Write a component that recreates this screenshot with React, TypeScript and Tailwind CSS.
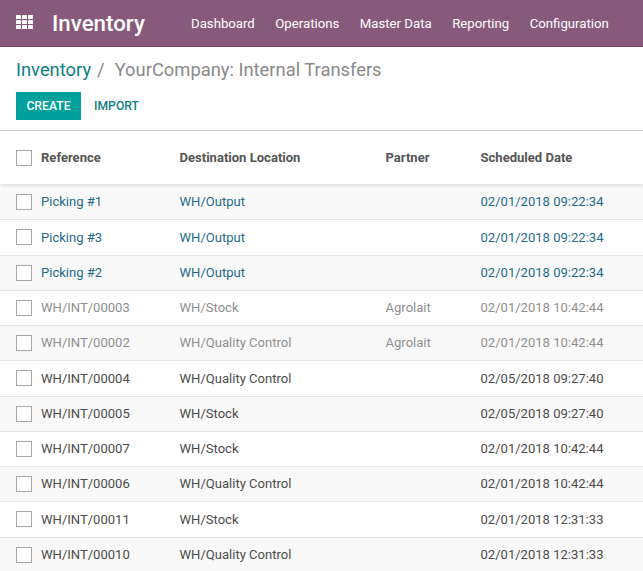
const NAV_ITEMS = ['Dashboard', 'Operations', 'Master Data', 'Reporting', 'Configuration']

type Tone = 'blue' | 'muted' | 'dark'

const ROWS: { ref: string; dest: string; partner: string; date: string; tone: Tone }[] = [
  { ref: 'Picking #1', dest: 'WH/Output', partner: '', date: '02/01/2018 09:22:34', tone: 'blue' },
  { ref: 'Picking #3', dest: 'WH/Output', partner: '', date: '02/01/2018 09:22:34', tone: 'blue' },
  { ref: 'Picking #2', dest: 'WH/Output', partner: '', date: '02/01/2018 09:22:34', tone: 'blue' },
  { ref: 'WH/INT/00003', dest: 'WH/Stock', partner: 'Agrolait', date: '02/01/2018 10:42:44', tone: 'muted' },
  { ref: 'WH/INT/00002', dest: 'WH/Quality Control', partner: 'Agrolait', date: '02/01/2018 10:42:44', tone: 'muted' },
  { ref: 'WH/INT/00004', dest: 'WH/Quality Control', partner: '', date: '02/05/2018 09:27:40', tone: 'dark' },
  { ref: 'WH/INT/00005', dest: 'WH/Stock', partner: '', date: '02/05/2018 09:27:40', tone: 'dark' },
  { ref: 'WH/INT/00007', dest: 'WH/Stock', partner: '', date: '02/01/2018 10:42:44', tone: 'dark' },
  { ref: 'WH/INT/00006', dest: 'WH/Quality Control', partner: '', date: '02/01/2018 10:42:44', tone: 'dark' },
  { ref: 'WH/INT/00011', dest: 'WH/Stock', partner: '', date: '02/01/2018 12:31:33', tone: 'dark' },
  { ref: 'WH/INT/00010', dest: 'WH/Quality Control', partner: '', date: '02/01/2018 12:31:33', tone: 'dark' },
]

const TONE_CLASS: Record<Tone, string> = {
  blue: 'text-[#1f6b8a]',
  muted: 'text-[#8f8f8f]',
  dark: 'text-[#4c4c4c]',
}

function Checkbox() {
  return <span className="block w-[16px] h-[16px] border border-[#a8a8a8] bg-white" />
}

function AppsIcon() {
  return (
    <svg width="18" height="14" viewBox="0 0 18 14" fill="#fff">
      {[0, 5, 10].map(y =>
        [0, 6, 12].map(x => <rect key={`${x}-${y}`} x={x} y={y} width="5" height="4" rx="0.6" />),
      )}
    </svg>
  )
}

export default function App() {
  return (
    <div className="w-[643px] h-[571px] overflow-hidden bg-white font-['Roboto',sans-serif]">
      {/* Navbar */}
      <div className="h-[47px] bg-[#875a7b] border-b border-[#6f4a66] flex items-center text-white">
        <div className="ml-[16px] w-[36px] mb-[2px]">
          <AppsIcon />
        </div>
        <span className="text-[22.3px] font-medium w-[139px] mt-[1px]">Inventory</span>
        <div className="flex gap-[20.5px] text-[13.2px] mt-[2px]">
          {NAV_ITEMS.map(item => (
            <span key={item}>{item}</span>
          ))}
        </div>
      </div>

      {/* Control panel */}
      <div className="h-[84px] pl-[16px] border-b border-[#cfcfcf]">
        <div className="pt-[11px] text-[18.35px] leading-[23px] text-[#8a8a8a]">
          <span className="text-[#0f7f80]">Inventory</span>
          <span className="ml-[6px]">/</span>
          <span className="ml-[10px]">YourCompany: Internal Transfers</span>
        </div>
        <div className="mt-[11px] flex items-center">
          <span className="w-[65px] h-[28px] pt-[1px] bg-[#00a09d] text-white text-[12.2px] font-medium flex items-center justify-center">
            CREATE
          </span>
          <span className="ml-[13px] pt-[1px] text-[#0f7f80] text-[12.2px] font-medium">IMPORT</span>
        </div>
      </div>

      {/* List header */}
      <div className="relative z-10 h-[53px] grid grid-cols-[25px_138.5px_206px_95px_1fr] pl-[16px] items-center bg-white text-[13.05px] font-bold text-[#555555] shadow-[0_2px_3px_rgba(0,0,0,0.12)]">
        <Checkbox />
        <span>Reference</span>
        <span>Destination Location</span>
        <span>Partner</span>
        <span>Scheduled Date</span>
      </div>

      {/* Rows */}
      <div className="mt-px">
        {ROWS.map((row, i) => (
          <div
            key={row.ref}
            className={`h-[35.25px] grid grid-cols-[25px_138.5px_206px_95px_1fr] pl-[16px] items-center text-[13.05px] border-b border-[#e6e6e6] ${
              i % 2 === 0 ? 'bg-[#f9f9f9]' : 'bg-white'
            } ${TONE_CLASS[row.tone]}`}
          >
            <Checkbox />
            <span>{row.ref}</span>
            <span>{row.dest}</span>
            <span>{row.partner}</span>
            <span>{row.date}</span>
          </div>
        ))}
      </div>
    </div>
  )
}
